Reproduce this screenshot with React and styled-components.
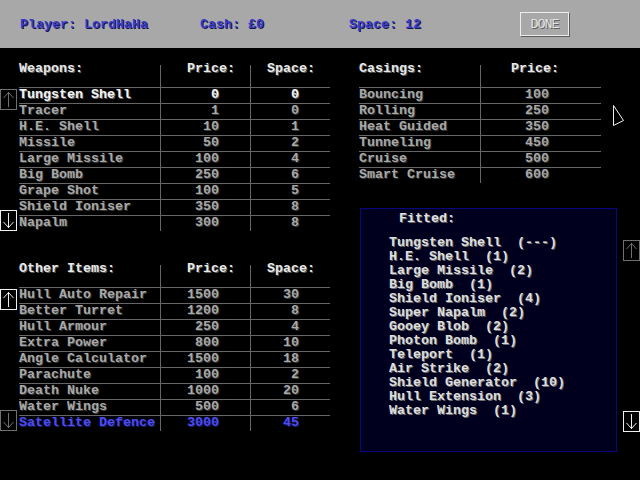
import React from 'react';
import styled, { createGlobalStyle } from 'styled-components';

const weapons = [
  ['Tungsten Shell', 0, 0],
  ['Tracer', 1, 0],
  ['H.E. Shell', 10, 1],
  ['Missile', 50, 2],
  ['Large Missile', 100, 4],
  ['Big Bomb', 250, 6],
  ['Grape Shot', 100, 5],
  ['Shield Ioniser', 350, 8],
  ['Napalm', 300, 8],
];

const others = [
  ['Hull Auto Repair', 1500, 30],
  ['Better Turret', 1200, 8],
  ['Hull Armour', 250, 4],
  ['Extra Power', 800, 10],
  ['Angle Calculator', 1500, 18],
  ['Parachute', 100, 2],
  ['Death Nuke', 1000, 20],
  ['Water Wings', 500, 6],
  ['Satellite Defence', 3000, 45],
];

const casings = [
  ['Bouncing', 100],
  ['Rolling', 250],
  ['Heat Guided', 350],
  ['Tunneling', 450],
  ['Cruise', 500],
  ['Smart Cruise', 600],
];

const fitted = [
  'Tungsten Shell  (---)',
  'H.E. Shell  (1)',
  'Large Missile  (2)',
  'Big Bomb  (1)',
  'Shield Ioniser  (4)',
  'Super Napalm  (2)',
  'Gooey Blob  (2)',
  'Photon Bomb  (1)',
  'Teleport  (1)',
  'Air Strike  (2)',
  'Shield Generator  (10)',
  'Hull Extension  (3)',
  'Water Wings  (1)',
];

const LINE = '#666666';

const GlobalStyle = createGlobalStyle`
  body {
    margin: 0;
    background: #000;
    font-family: "Liberation Mono", "DejaVu Sans Mono", monospace;
    font-weight: bold;
    font-size: 13.33px;
  }
`;

const Screen = styled.div`
  position: relative;
  width: 640px;
  height: 480px;
  overflow: hidden;
  background: #000;
`;

const TopBar = styled.div`
  height: 48px;
  background: #a8a8a8;
  display: flex;
  align-items: center;
  padding-left: 20px;
`;

const Stat = styled.div`
  width: ${p => p.w}px;
  color: #3c3cc8;
  text-shadow: 1px 1px 0 #14144c;
  white-space: pre;
`;

const DoneButton = styled.div`
  width: 47px;
  height: 22px;
  border: 1px solid #ececec;
  box-shadow: 1px 1px 0 #5c5c5c;
  display: flex;
  align-items: center;
  justify-content: center;
  color: #e4e4e4;
  text-shadow: 1px 1px 0 #606060;
  font-weight: normal;
  letter-spacing: -1px;
`;

const Main = styled.div`
  display: flex;
  padding-top: 17px;
`;

const LeftPane = styled.div`
  width: 340px;
  display: flex;
  flex-direction: column;
  gap: 34px;
`;

const TableBlock = styled.div`
  display: flex;
  gap: 2px;
`;

const ArrowCol = styled.div`
  display: flex;
  flex-direction: column;
  justify-content: space-between;
  padding-top: ${p => p.top || 0}px;
  padding-bottom: ${p => p.bottom || 0}px;
  margin-left: ${p => p.left || 0}px;
`;

const ArrowBox = styled.div`
  width: 15px;
  height: 19px;
  border: 1px solid ${p => (p.on ? '#f0f0f0' : '#707070')};
  color: ${p => (p.on ? '#f0f0f0' : '#707070')};
  display: flex;
`;

const Table = styled.div`
  display: grid;
  grid-template-columns: ${p => p.cols};
`;

const HeadCell = styled.div`
  height: 22px;
  line-height: 8px;
  color: #e8e8e8;
  text-shadow: 1px 1px 0 #5a5a5a;
  text-align: ${p => (p.right ? 'right' : 'left')};
  padding-right: ${p => p.pr || 0}px;
  border-left: ${p => (p.divider ? `1px solid ${LINE}` : 'none')};
  white-space: pre;
`;

const Cell = styled.div`
  height: 15px;
  line-height: 14px;
  border-top: 1px solid ${LINE};
  border-left: ${p => (p.divider ? `1px solid ${LINE}` : 'none')};
  text-align: ${p => (p.right ? 'right' : 'left')};
  padding-right: ${p => p.pr || 0}px;
  white-space: pre;
  color: ${p => (p.tone === 'white' ? '#f4f4f4' : p.tone === 'blue' ? '#4c4cf0' : '#a8a8a8')};
  text-shadow: 1px 1px 0 ${p => (p.tone === 'blue' ? '#1c1c70' : p.tone === 'white' ? '#6a6a6a' : '#3a3a3a')};
`;

const RightPane = styled.div`
  display: flex;
  flex-direction: column;
`;

const CasingsWrap = styled.div`
  margin-left: 19px;
`;

const FittedRow = styled.div`
  display: flex;
  margin-top: 25px;
  margin-left: 20px;
`;

const FittedBox = styled.div`
  width: 255px;
  height: 239px;
  border: 1px solid #08087e;
  background: #00001e;
  padding-top: 3px;
`;

const FittedTitle = styled.div`
  padding-left: 38px;
  line-height: 14px;
  margin-bottom: 10px;
  color: #e0e0e0;
  text-shadow: 1px 1px 0 #6a6a6a;
`;

const FittedItem = styled.div`
  padding-left: 28px;
  line-height: 14px;
  white-space: pre;
  color: #dedede;
  text-shadow: 1px 1px 0 #6a6a6a;
`;

const Cursor = styled.svg`
  position: absolute;
  left: 612px;
  top: 104px;
`;

function Arrow({ dir, on }) {
  const up = dir === 'up';
  return (
    <ArrowBox on={on}>
      <svg width="15" height="19" viewBox="0 0 15 19">
        <g stroke="currentColor" strokeWidth="1" fill="none">
          <line x1="7.5" y1="2" x2="7.5" y2="17" />
          {up ? (
            <polyline points="2.5,8 7.5,2.5 12.5,8" />
          ) : (
            <polyline points="2.5,11 7.5,16.5 12.5,11" />
          )}
        </g>
      </svg>
    </ArrowBox>
  );
}

function ItemTable({ title, rows, selected, selTone }) {
  return (
    <Table cols="141px 90px 80px">
      <HeadCell>{title}</HeadCell>
      <HeadCell divider right pr={15}>Price:</HeadCell>
      <HeadCell divider right pr={15}>Space:</HeadCell>
      {rows.map(([name, price, space], i) => {
        const tone = i === selected ? selTone : 'gray';
        return (
          <React.Fragment key={name}>
            <Cell tone={tone}>{name}</Cell>
            <Cell tone={tone} divider right pr={31}>{price}</Cell>
            <Cell tone={tone} divider right pr={31}>{space}</Cell>
          </React.Fragment>
        );
      })}
    </Table>
  );
}

export default function App() {
  return (
    <Screen>
      <GlobalStyle />
      <TopBar>
        <Stat w={180}>Player: LordHaHa</Stat>
        <Stat w={149}>Cash: £0</Stat>
        <Stat w={171}>Space: 12</Stat>
        <DoneButton>DONE</DoneButton>
      </TopBar>
      <Main>
        <LeftPane>
          <TableBlock>
            <ArrowCol top={24}>
              <Arrow dir="up" />
              <Arrow dir="down" on />
            </ArrowCol>
            <ItemTable title="Weapons:" rows={weapons} selected={0} selTone="white" />
          </TableBlock>
          <TableBlock>
            <ArrowCol top={24}>
              <Arrow dir="up" on />
              <Arrow dir="down" />
            </ArrowCol>
            <ItemTable title="Other Items:" rows={others} selected={8} selTone="blue" />
          </TableBlock>
        </LeftPane>
        <RightPane>
          <CasingsWrap>
            <Table cols="121px 121px">
              <HeadCell>Casings:</HeadCell>
              <HeadCell divider right pr={42}>Price:</HeadCell>
              {casings.map(([name, price]) => (
                <React.Fragment key={name}>
                  <Cell tone="gray">{name}</Cell>
                  <Cell tone="gray" divider right pr={52}>{price}</Cell>
                </React.Fragment>
              ))}
            </Table>
          </CasingsWrap>
          <FittedRow>
            <FittedBox>
              <FittedTitle>Fitted:</FittedTitle>
              {fitted.map(f => (
                <FittedItem key={f}>{f}</FittedItem>
              ))}
            </FittedBox>
            <ArrowCol top={32} bottom={20} left={6}>
              <Arrow dir="up" />
              <Arrow dir="down" on />
            </ArrowCol>
          </FittedRow>
        </RightPane>
      </Main>
      <Cursor width="14" height="24" viewBox="0 0 14 24">
        <polygon points="1.5,1.5 11.5,16.5 1.5,21.5" fill="none" stroke="#f0f0f0" strokeWidth="1" />
      </Cursor>
    </Screen>
  );
}
